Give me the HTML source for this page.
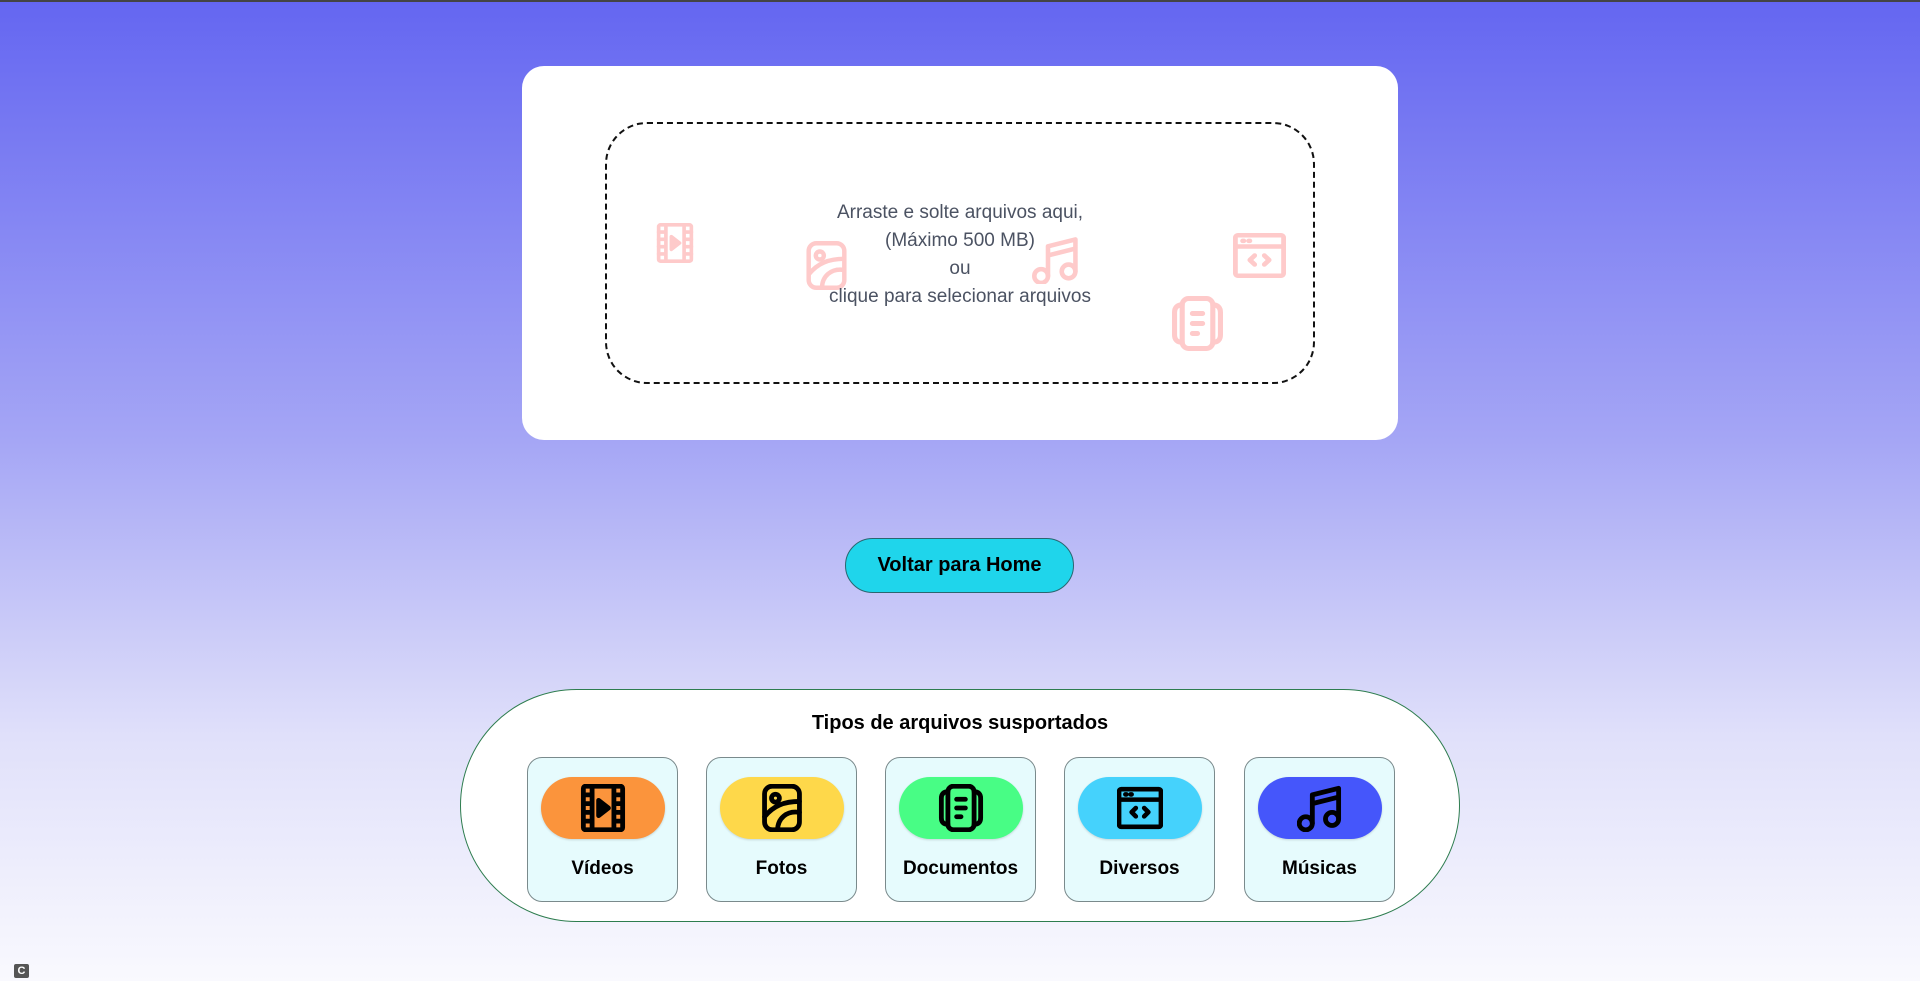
<!DOCTYPE html>
<html><head><meta charset="utf-8"><style>
*{box-sizing:border-box;margin:0;padding:0}
body{width:1920px;height:981px;overflow:hidden;font-family:"Liberation Sans",sans-serif;background:linear-gradient(#6466f1 0%,#a5a6f5 45%,#e0e0fa 75%,#f9f9fe 100%);position:relative;border-top:2px solid #444}
.card{position:absolute;left:522px;top:64px;width:876px;height:374px;background:#fff;border-radius:22px}
.drop{position:absolute;left:83px;top:56px;width:710px;height:262px;border:2px dashed #111;border-radius:42px}
.txt{position:absolute;left:0;right:0;top:75px;text-align:center;font-size:19px;line-height:28px;color:#4b5262}
.g{position:absolute;stroke:#fecaca;fill:none;stroke-width:2;stroke-linecap:round;stroke-linejoin:round}
.btn{position:absolute;left:845px;top:536px;width:229px;height:55px;background:#1fd5eb;border:1px solid #2a6670;border-radius:28px;text-align:center;line-height:53px;font-weight:bold;font-size:20px;color:#000}
.sup{position:absolute;left:460px;top:687px;width:1000px;height:233px;background:#fff;border:1.5px solid #2e7d4f;border-radius:117px}
.sup h2{position:absolute;top:22px;left:0;right:0;text-align:center;font-size:20px;font-weight:bold}
.it{position:absolute;top:67px;width:151px;height:145px;background:#e6fbfd;border:1px solid #7a8a8c;border-radius:15px}
.pill{position:absolute;left:13px;top:19px;width:124px;height:62px;border-radius:31px;display:flex;align-items:center;justify-content:center;box-shadow:0 1px 2px rgba(0,0,0,.15)}
.pill svg{width:46px;height:48px;stroke:#000;fill:none;stroke-width:2.2;stroke-linecap:round;stroke-linejoin:round}
.lb{position:absolute;top:100px;left:0;right:0;text-align:center;font-weight:bold;font-size:19px}
.c{position:absolute;left:14px;top:962px;width:15px;height:14px;background:#555;border-radius:2px;color:#fff;font-size:11px;font-weight:bold;text-align:center;line-height:14px}
</style></head><body>
<svg width="0" height="0" style="position:absolute"><defs>
<g id="vid"><rect x="3" y="2" width="18" height="20" rx="1"/><path d="M7 2v20M17 2v20M3 6h4M3 10h4M3 14h4M3 18h4M17 6h4M17 10h4M17 14h4M17 18h4"/><path d="M10 8.5l4.5 3.5-4.5 3.5z" fill="currentColor"/></g>
<g id="img"><rect x="4" y="2" width="16" height="20" rx="3.5"/><circle cx="9" cy="7.5" r="1.8"/><path d="M4 16c4-5 9-7 16-7M10 22c0-5 4-9 10-8"/></g>
<g id="doc"><rect x="6" y="2" width="12" height="20" rx="2.5"/><path d="M6 4.5c-2 0-3 1.2-3 3v9c0 2 1 3 3 3M18 4.5c2 0 3 1.200 3 3v9c0 2-1 3-3 3M10 8h4M10 12h4M10 16h2"/></g>
<g id="code"><rect x="2" y="3" width="20" height="18" rx="1"/><path d="M2 8h20M5 5.5h0.5M7.5 5.5h0.5M10 12l-2 2 2 2M14 12l2 2-2 2"/></g>
<g id="mus"><circle cx="5.5" cy="18.5" r="3"/><circle cx="17.5" cy="16.5" r="3"/><path d="M8.5 18.5V5.5l12-3v14M8.5 9.5l12-3"/></g>
</defs></svg>
<div class="card"><div class="drop">
<svg class="g" style="left:48px;top:99px;color:#fecaca" width="40" height="40" viewBox="2 1 20 22"><use href="#vid"/></svg>
<svg class="g" style="left:196px;top:117px" width="47" height="49" viewBox="3 1 18 22"><use href="#img"/></svg>
<svg class="g" style="left:425px;top:112px" width="48" height="48" viewBox="1.5 1 21 21"><use href="#mus"/></svg>
<svg class="g" style="left:626px;top:109px" width="53" height="45" viewBox="1 2 22 20" preserveAspectRatio="none"><use href="#code"/></svg>
<svg class="g" style="left:565px;top:172px" width="51" height="55" viewBox="2 1 20 22" preserveAspectRatio="none"><use href="#doc"/></svg>
<div class="txt">Arraste e solte arquivos aqui,<br>(Máximo 500 MB)<br>ou<br>clique para selecionar arquivos</div>
</div></div>
<div class="btn">Voltar para Home</div>
<div class="sup"><h2>Tipos de arquivos susportados</h2>
<div class="it" style="left:66px"><div class="pill" style="background:#fb943c"><svg viewBox="2 1 20 22" style="color:#000"><use href="#vid"/></svg></div><div class="lb">Vídeos</div></div>
<div class="it" style="left:245px"><div class="pill" style="background:#fed84a"><svg viewBox="3 1 18 22"><use href="#img"/></svg></div><div class="lb">Fotos</div></div>
<div class="it" style="left:424px"><div class="pill" style="background:#48fd85"><svg viewBox="2 1 20 22"><use href="#doc"/></svg></div><div class="lb">Documentos</div></div>
<div class="it" style="left:603px"><div class="pill" style="background:#45d2fc"><svg viewBox="1 2 22 20"><use href="#code"/></svg></div><div class="lb">Diversos</div></div>
<div class="it" style="left:783px"><div class="pill" style="background:#4556fb"><svg viewBox="1.5 1 21 21"><use href="#mus"/></svg></div><div class="lb">Músicas</div></div>
</div>
<div class="c">C</div>
</body></html>
